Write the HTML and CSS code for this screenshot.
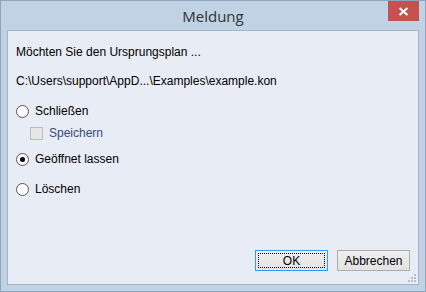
FILE: index.html
```html
<!DOCTYPE html>
<html lang="de">
<head>
   <meta charset="UTF-8">
   <title>Meldung</title>
   <link rel="stylesheet" href="styles.css">
</head>
<body>
   <div class="window">
       <div class="titlebar">
           <span class="title">Meldung</span>
           <div class="close">
               <svg width="11" height="9" viewBox="0 0 11 9"><path d="M1.5 1 L9.5 8 M9.5 1 L1.5 8" stroke="#fff" stroke-width="2"/></svg>
           </div>
       </div>
       <div class="content">
           <p class="line">Möchten Sie den Ursprungsplan ...</p>
           <p class="line path">C:\Users\support\AppD...\Examples\example.kon</p>

           <div class="options">
               <label class="option"><span class="radio"></span>Schließen</label>
               <label class="option sub"><span class="check"></span>Speichern</label>
               <label class="option open"><span class="radio on"></span>Geöffnet lassen</label>
               <label class="option last"><span class="radio"></span>Löschen</label>
           </div>

           <div class="buttons">
               <button class="btn default"><span class="focus">OK</span></button>
               <button class="btn">Abbrechen</button>
           </div>
           <div class="grip">
               <svg width="8" height="8" viewBox="0 0 8 8" fill="#b8c0cc"><rect x="6" y="0" width="2" height="2"/><rect x="3" y="3" width="2" height="2"/><rect x="6" y="3" width="2" height="2"/><rect x="0" y="6" width="2" height="2"/><rect x="3" y="6" width="2" height="2"/><rect x="6" y="6" width="2" height="2"/></svg>
           </div>
       </div>
   </div>
</body>
</html>
```

FILE: styles.css
```css
html, body {
    margin: 0;
    padding: 0;
}
body {
    font-family: "Liberation Sans", Arial, sans-serif;
    font-size: 12px;
    color: #000;
    width: 426px;
    height: 292px;
    overflow: hidden;
}
.window {
    box-sizing: border-box;
    width: 426px;
    height: 292px;
    background-color: #bfd3e5;
    border: 1px solid #8fa5bb;
    padding: 0 6px 6px 6px;
    display: flex;
    flex-direction: column;
}
.titlebar {
    height: 29px;
    display: flex;
    justify-content: center;
    align-items: center;
    position: relative;
}
.title {
    font-family: "Open Sans", "Noto Sans", sans-serif;
    font-size: 15px;
    color: #333;
    margin-top: 1px;
}
.close {
    position: absolute;
    right: 0;
    top: 0;
    width: 31px;
    height: 20px;
    background-color: #c75050;
    display: flex;
    justify-content: center;
    align-items: center;
}
.content {
    flex: 1;
    background-color: #e8ecf5;
    border: 1px solid #a3b5c7;
    padding: 0 8px;
    display: flex;
    flex-direction: column;
    position: relative;
}
.line {
    margin: 14px 0 0 0;
    line-height: 14px;
}
.path {
    margin-top: 15px;
}
.options {
    margin-top: 16px;
    display: flex;
    flex-direction: column;
}
.option {
    display: flex;
    align-items: center;
    height: 14px;
    line-height: 14px;
    gap: 6px;
}
.option.sub {
    margin-top: 8px;
    padding-left: 14px;
    color: #3a4a7a;
}
.option.open {
    margin-top: 12px;
}
.option.last {
    margin-top: 16px;
}
.radio {
    box-sizing: border-box;
    width: 13px;
    height: 13px;
    border-radius: 50%;
    border: 1px solid #555;
    background-color: #fff;
    display: flex;
    justify-content: center;
    align-items: center;
}
.radio.on::after {
    content: "";
    width: 5px;
    height: 5px;
    border-radius: 50%;
    background-color: #000;
}
.check {
    box-sizing: border-box;
    width: 13px;
    height: 13px;
    border: 1px solid #bcbcbc;
    background-color: #e6e6e6;
}
.buttons {
    margin-top: auto;
    margin-bottom: 13px;
    display: flex;
    justify-content: flex-end;
    gap: 9px;
}
.btn {
    box-sizing: border-box;
    width: 73px;
    height: 21px;
    font-family: "Liberation Sans", Arial, sans-serif;
    font-size: 12px;
    color: #000;
    background: linear-gradient(#efefef, #e3e3e3);
    border: 1px solid #adadad;
    padding: 0;
    display: flex;
    justify-content: center;
    align-items: center;
}
.btn.default {
    border-color: #3399ff;
    padding: 2px;
}
.focus {
    box-sizing: border-box;
    width: 100%;
    height: 100%;
    border: 1px dotted #000;
    display: flex;
    justify-content: center;
    align-items: center;
}
.grip {
    position: absolute;
    right: 2px;
    bottom: 2px;
    line-height: 0;
}
```
